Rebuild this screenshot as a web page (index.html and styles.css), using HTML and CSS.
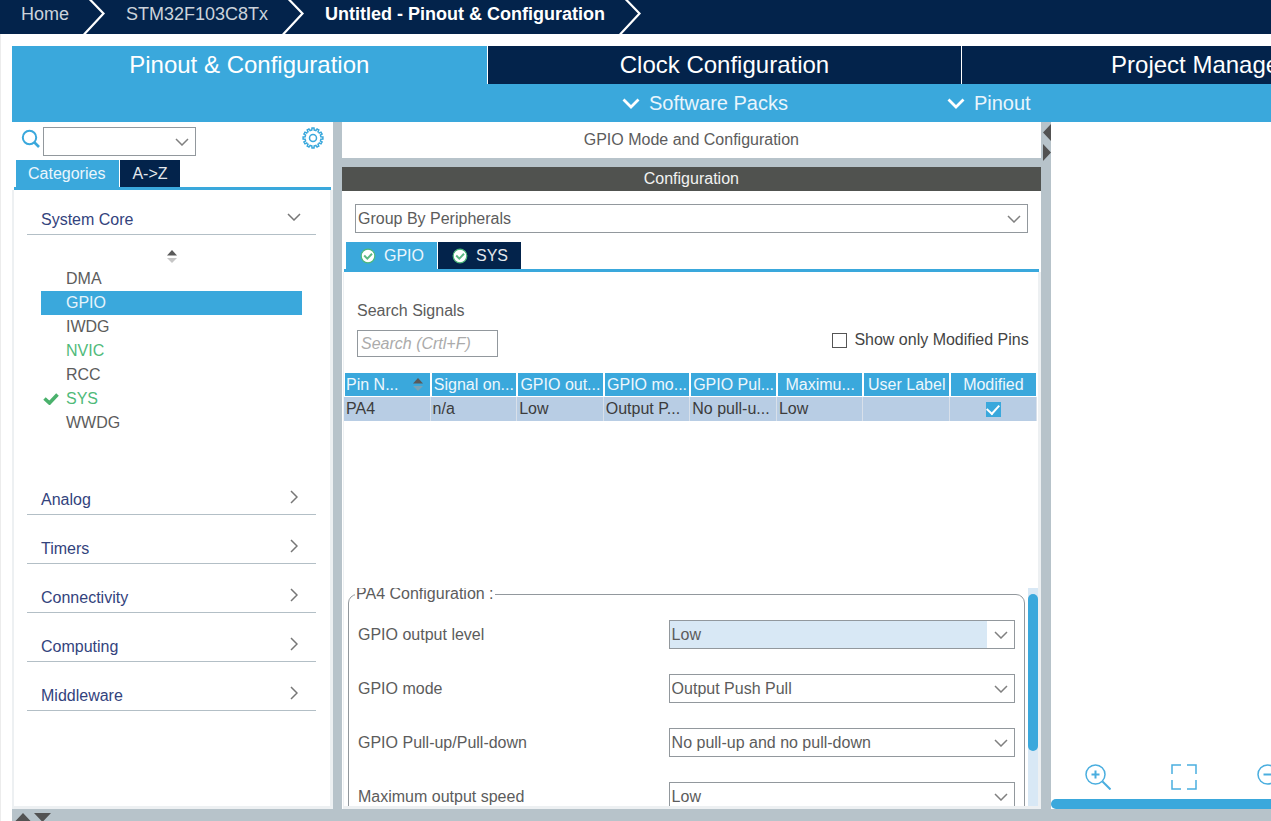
FILE: index.html
```html
<!DOCTYPE html>
<html lang="en">
<head>
<meta charset="utf-8">
<title>Untitled - Pinout &amp; Configuration</title>
<link rel="stylesheet" href="styles.css">
</head>
<body>
<svg class="defs" aria-hidden="true">
  <symbol id="chev-down" viewBox="0 0 14 8"><path d="M1 1l6 6 6-6" fill="none" stroke="currentColor" stroke-width="1.5"/></symbol>
  <symbol id="chev-right" viewBox="0 0 8 14"><path d="M1 1l6 6-6 6" fill="none" stroke="currentColor" stroke-width="1.5"/></symbol>
  <symbol id="crumb-sep" viewBox="0 0 24 34"><path d="M6 -1.500L20.500 13.500 1 34.500" fill="none" stroke="#fff" stroke-width="2.200"/></symbol>
  <symbol id="menu-chev" viewBox="0 0 18 11"><path d="M1.500 1.500L9 9l7.500-7.500" fill="none" stroke="#fff" stroke-width="2.800"/></symbol>
  <symbol id="sort" viewBox="0 0 10 13"><path d="M0 5.500L5 0l5 5.500z" class="sort-up"/><path d="M0 8h10L5 13z" class="sort-dn"/></symbol>
  <symbol id="ok" viewBox="0 0 16 16"><circle cx="8" cy="8" r="6.800" fill="#fff" stroke="#4db87a" stroke-width="1.200"/><path d="M4.200 7.500L7.300 10.600 12 5.800" fill="none" stroke="#5cb983" stroke-width="2"/></symbol>
  <symbol id="tooth" viewBox="0 0 22 22"><path d="M8.900 3.300L9.800 3.100 10 1.100h2l.2 2 .9.200" fill="none" stroke="#3aa8dc" stroke-width="1.500"/></symbol>
</svg>

<nav class="crumbs" aria-label="Breadcrumb">
  <a href="#" class="crumb">Home</a><svg class="sep"><use href="#crumb-sep"/></svg>
  <a href="#" class="crumb">STM32F103C8Tx</a><svg class="sep"><use href="#crumb-sep"/></svg>
  <a href="#" class="crumb current">Untitled - Pinout &amp; Configuration</a><svg class="sep"><use href="#crumb-sep"/></svg>
</nav>

<div class="app">
  <div class="main-tabs">
    <button class="main-tab active">Pinout &amp; Configuration</button>
    <button class="main-tab">Clock Configuration</button>
    <button class="main-tab">Project Manager</button>
  </div>
  <div class="subbar">
    <button class="menu"><svg class="menu-icon"><use href="#menu-chev"/></svg>Software Packs</button>
    <button class="menu"><svg class="menu-icon"><use href="#menu-chev"/></svg>Pinout</button>
  </div>

  <div class="workspace">
    <aside class="side">
      <div class="side-search">
        <svg class="lens" viewBox="0 0 20 20"><circle cx="8.500" cy="8.500" r="6.700" fill="none" stroke="#3aa8dc" stroke-width="2"/><path d="M13 13l5 5" stroke="#3aa8dc" stroke-width="2.600"/></svg>
        <span class="combo side-combo"><select aria-label="Search"><option></option></select><svg class="arrow"><use href="#chev-down"/></svg></span>
        <button class="gear" aria-label="Settings"><svg viewBox="0 0 22 22" fill="none" stroke="#3aa8dc"><use href="#tooth"/><use href="#tooth" transform="rotate(30 11 11)"/><use href="#tooth" transform="rotate(60 11 11)"/><use href="#tooth" transform="rotate(90 11 11)"/><use href="#tooth" transform="rotate(120 11 11)"/><use href="#tooth" transform="rotate(150 11 11)"/><use href="#tooth" transform="rotate(180 11 11)"/><use href="#tooth" transform="rotate(210 11 11)"/><use href="#tooth" transform="rotate(240 11 11)"/><use href="#tooth" transform="rotate(270 11 11)"/><use href="#tooth" transform="rotate(300 11 11)"/><use href="#tooth" transform="rotate(330 11 11)"/><circle cx="11" cy="11" r="3.500" stroke-width="1.500"/></svg></button>
      </div>
      <div class="tabs"><button class="tab active">Categories</button><button class="tab">A-&gt;Z</button></div>
      <div class="side-pane">
        <button class="cat">System Core<svg class="cat-down"><use href="#chev-down"/></svg></button>
        <div class="cat-body">
          <button class="sort-btn" aria-label="Sort"><svg class="sort"><use href="#sort"/></svg></button>
          <ul class="items">
            <li>DMA</li>
            <li class="selected">GPIO</li>
            <li>IWDG</li>
            <li class="green">NVIC</li>
            <li>RCC</li>
            <li class="green"><svg class="tick" viewBox="0 0 16 12"><path d="M1.500 5.500l5 4.500L14.500 1.500" fill="none" stroke="#4ab16c" stroke-width="3.600"/></svg>SYS</li>
            <li>WWDG</li>
          </ul>
        </div>
        <button class="cat">Analog<svg class="cat-right"><use href="#chev-right"/></svg></button>
        <button class="cat">Timers<svg class="cat-right"><use href="#chev-right"/></svg></button>
        <button class="cat">Connectivity<svg class="cat-right"><use href="#chev-right"/></svg></button>
        <button class="cat">Computing<svg class="cat-right"><use href="#chev-right"/></svg></button>
        <button class="cat">Middleware<svg class="cat-right"><use href="#chev-right"/></svg></button>
      </div>
    </aside>

    <div class="splitter"></div>

    <main class="center">
      <h1 class="mode-title">GPIO Mode and Configuration</h1>
      <h2 class="conf-title">Configuration</h2>
      <div class="group-row">
        <span class="combo"><select aria-label="Grouping"><option>Group By Peripherals</option></select><svg class="arrow"><use href="#chev-down"/></svg></span>
      </div>
      <div class="tabs"><button class="tab io active"><svg class="ok"><use href="#ok"/></svg>GPIO</button><button class="tab io"><svg class="ok"><use href="#ok"/></svg>SYS</button></div>
      <div class="center-pane">
        <div class="filters">
          <div class="search-group">
            <label for="signals">Search Signals</label>
            <input id="signals" class="search" type="text" placeholder="Search (Crtl+F)">
          </div>
          <label class="only"><input type="checkbox" class="box">Show only Modified Pins</label>
        </div>
        <table class="pins">
          <thead>
            <tr>
              <th><span class="pin-head">Pin N... <svg class="sort"><use href="#sort"/></svg></span></th>
              <th>Signal on...</th><th>GPIO out...</th><th>GPIO mo...</th><th>GPIO Pul...</th><th>Maximu...</th><th>User Label</th><th>Modified</th>
            </tr>
          </thead>
          <tbody>
            <tr>
              <td>PA4</td><td>n/a</td><td>Low</td><td>Output P...</td><td>No pull-u...</td><td>Low</td><td></td>
              <td class="mod"><input type="checkbox" class="box blue" aria-label="Modified" checked></td>
            </tr>
          </tbody>
        </table>
        <div class="spacer"></div>
        <div class="detail">
          <div class="detail-view">
            <fieldset class="pa4">
              <legend>PA4 Configuration :</legend>
              <div class="field"><label for="lvl">GPIO output level</label><span class="combo focus"><select id="lvl"><option>Low</option></select><svg class="arrow"><use href="#chev-down"/></svg></span></div>
              <div class="field"><label for="mode">GPIO mode</label><span class="combo"><select id="mode"><option>Output Push Pull</option></select><svg class="arrow"><use href="#chev-down"/></svg></span></div>
              <div class="field"><label for="pull">GPIO Pull-up/Pull-down</label><span class="combo"><select id="pull"><option>No pull-up and no pull-down</option></select><svg class="arrow"><use href="#chev-down"/></svg></span></div>
              <div class="field"><label for="speed">Maximum output speed</label><span class="combo"><select id="speed"><option>Low</option></select><svg class="arrow"><use href="#chev-down"/></svg></span></div>
            </fieldset>
          </div>
          <div class="track"><div class="thumb"></div></div>
        </div>
      </div>
    </main>

    <div class="splitter wide">
      <svg class="collapse" viewBox="0 0 8 38"><path d="M8 1v17L0 9.500zM0 21v17l8-8.500z" fill="#525252"/></svg>
    </div>

    <section class="canvas" aria-label="Pinout view">
      <div class="tools">
        <button class="tool" aria-label="Zoom in"><svg viewBox="0 0 26 26"><circle cx="10.500" cy="10.500" r="9.500"/><path d="M17.500 17.500l8 8" stroke-width="2"/><path d="M6.500 10.500h8M10.500 6.500v8" stroke-width="2"/></svg></button>
        <button class="tool" aria-label="Best fit"><svg viewBox="0 0 26 26"><path d="M1 10V1h9M16 1h9v9M25 16v9h-9M10 25H1v-9"/></svg></button>
        <button class="tool" aria-label="Zoom out"><svg viewBox="0 0 26 26"><circle cx="10.500" cy="10.500" r="9.500"/><path d="M17.500 17.500l8 8" stroke-width="2"/><path d="M6.500 10.500h8" stroke-width="2"/></svg></button>
      </div>
      <div class="hscroll"></div>
    </section>
  </div>
  <div class="bottom-bar"><svg class="expand" viewBox="0 0 36 8"><path d="M0 8.500L8 0l8 8.500zM19 0h17l-8.500 9z" fill="#525252"/></svg></div>
</div>
</body>
</html>
```
FILE: styles.css
```css
* { box-sizing: border-box; }

body {
  margin: 0;
  height: 100vh;
  display: flex;
  flex-direction: column;
  overflow: hidden;
  background: #fff;
  color: #5c5c5c;
  font-family: "Liberation Sans", Arial, sans-serif;
  font-size: 16px;
  line-height: 20px;
}

button, select, input {
  font: inherit;
  color: inherit;
  margin: 0;
}

button {
  border: 0;
  padding: 0;
  background: none;
}

.defs { position: absolute; width: 0; height: 0; }

/* Breadcrumb */
.crumbs {
  flex: none;
  display: flex;
  height: 34px;
  padding-left: 21px;
  background: #03234b;
}

.crumb {
  color: #ccd3db;
  font-size: 18px;
  line-height: 28px;
  text-decoration: none;
  white-space: nowrap;
}

.crumb.current { color: #fff; font-weight: bold; }

.sep { width: 24px; height: 34px; margin: 0 19px 0 14px; }

/* Frame */
.app {
  flex: 1;
  min-height: 0;
  display: flex;
  flex-direction: column;
  padding: 12px 0 0 11px;
  border-left: 1px solid #ececec;
}

.main-tabs {
  flex: none;
  display: grid;
  grid-template-columns: repeat(3, 37.7%);
  height: 38px;
  overflow: hidden;
}

.main-tab {
  background: #03234b;
  border-left: 1px solid #fff;
  color: #fff;
  font-size: 24px;
  line-height: 38px;
}

.main-tab.active { background: #3aa8dc; border-left: 0; }

.subbar {
  flex: none;
  display: flex;
  gap: 159px;
  height: 38px;
  padding-left: 610px;
  background: #3aa8dc;
}

.menu {
  display: flex;
  align-items: center;
  gap: 9px;
  color: #e9f5fc;
  font-size: 20px;
}

.menu-icon { width: 18px; height: 11px; }

.workspace { flex: 1; min-height: 0; display: flex; }

.splitter { flex: none; width: 9px; background: #b7c3ca; }
.splitter.wide { width: 10px; padding: 1px 0 0 2px; }
.collapse { display: block; width: 8px; height: 38px; }

/* Side panel */
.side {
  flex: none;
  width: 321px;
  display: flex;
  flex-direction: column;
}

.side-search {
  display: flex;
  align-items: flex-start;
  height: 38px;
  padding: 5px 9px 0;
}

.lens { width: 20px; height: 20px; margin: 2px 2px 0 0; }
.side-combo { width: 153px; }
.gear { width: 22px; height: 22px; margin-left: auto; }
.gear svg { display: block; width: 22px; height: 22px; }

.tabs {
  flex: none;
  display: flex;
  gap: 1px;
  margin: 0 2px;
  padding-left: 2px;
  border-bottom: 3px solid #3aa8dc;
}

.tab {
  height: 27px;
  padding: 0 12px;
  background: #03234b;
  color: #e4e8ed;
}

.side .tab.active { padding: 0 14px 0 12px; }
.tab.active { background: #3aa8dc; color: #eaf6fc; }

.tab.io {
  display: flex;
  align-items: center;
  gap: 8px;
  padding: 0 13px 0 14px;
}

.ok { width: 16px; height: 16px; }

.side-pane {
  flex: 1;
  min-height: 0;
  display: flex;
  flex-direction: column;
  padding: 0 14px 0 13px;
  border: solid #edf0f2;
  border-width: 0 3px 3px 2px;
}

.cat {
  flex: none;
  display: flex;
  align-items: center;
  justify-content: space-between;
  height: 49px;
  padding: 19px 15px 0 14px;
  border-bottom: 1px solid #b3bfc6;
  color: #33437d;
}

.cat:first-child { height: 45px; padding-top: 15px; }
.cat svg { color: #777; margin-bottom: 5px; }
.cat-down { width: 14px; height: 8px; }
.cat-right { width: 8px; height: 14px; margin-right: 3px; }

.cat-body { flex: none; height: 231px; padding: 15px 14px 0; }

.sort-btn { display: flex; justify-content: center; width: 100%; height: 17px; }
.sort { width: 10px; height: 13px; }
.sort-up { fill: #5a5a5a; }
.sort-dn { fill: #a0a0a0; opacity: 0.6; }

.items { margin: 0; padding: 0; list-style: none; }

.items li {
  display: flex;
  align-items: center;
  height: 24px;
  padding-left: 25px;
}

.items .selected { background: #3aa8dc; color: #e6f4fb; }
.items .green { color: #4fba7a; }
.tick { width: 16px; height: 12px; margin: 0 7px 0 -23px; }

/* Combo boxes */
.combo { display: grid; background: #fff; border: 1px solid #92989d; }
.combo select, .combo .arrow { grid-area: 1 / 1; }

.combo select {
  width: 100%;
  height: 27px;
  padding: 0 28px 0 2px;
  border: 0;
  appearance: none;
  background: none;
}

.combo .arrow {
  justify-self: end;
  align-self: center;
  width: 14px;
  height: 8px;
  margin-right: 6px;
  color: #808080;
  pointer-events: none;
}

.combo.focus { background: linear-gradient(to left, #fff 27px, #d8e8f5 27px); }

/* Center panel */
.center {
  flex: 1 1 699px;
  min-width: 0;
  display: flex;
  flex-direction: column;
}

.mode-title, .conf-title {
  flex: none;
  margin: 0;
  font-size: 16px;
  font-weight: normal;
  text-align: center;
}

.mode-title {
  padding: 8px 0;
  border-bottom: 9px solid #b7c3ca;
}

.conf-title { background: #50524f; color: #f2f2f2; line-height: 24px; }
.group-row { padding: 13px 13px 9px; }

.center-pane {
  flex: 1;
  min-height: 0;
  display: flex;
  flex-direction: column;
  margin-left: 1px;
  border: solid #edf0f2;
  border-width: 0 3px 3px 1px;
}

.filters {
  flex: none;
  display: flex;
  justify-content: space-between;
  align-items: flex-end;
  padding: 29px 9px 16px 13px;
}

.search-group { display: flex; flex-direction: column; gap: 9px; }

.search {
  width: 141px;
  height: 27px;
  padding: 0 3px;
  border: 1px solid #92989d;
}

.search::placeholder { color: #ababab; font-style: italic; }

.only {
  display: flex;
  align-items: center;
  gap: 7px;
  margin-bottom: 7px;
  color: #444;
}

.box {
  appearance: none;
  width: 15px;
  height: 15px;
  border: 1px solid #555;
  background: #fff;
}

.box.blue {
  display: grid;
  place-items: center;
  margin: 0 auto;
  border: 0;
  background: #3aa8dc;
}

.box.blue:checked::before {
  content: "";
  width: 6px;
  height: 10px;
  margin-bottom: 3px;
  border: solid #fff;
  border-width: 0 2px 2px 0;
  transform: rotate(42deg);
}

.pins {
  flex: none;
  width: 100%;
  table-layout: fixed;
  border-collapse: separate;
  border-spacing: 0;
  padding-right: 1px;
}

.pins th, .pins td {
  height: 24px;
  padding: 0 1px;
  overflow: hidden;
  white-space: nowrap;
  text-align: left;
  font-weight: normal;
}

.pins th {
  background: #3aa8dc;
  border: solid #fff;
  border-width: 0 1px 1px;
  color: #eef7fc;
  text-align: center;
}

.pins td { padding-left: 2px; background: #b8cde4; border-right: 1px solid #d8e0ea; color: #3c3c3c; }
.pin-head { display: flex; align-items: center; justify-content: space-between; padding-right: 6px; }

.spacer { flex: 1 1 auto; }

.detail {
  flex: none;
  display: flex;
  height: 218px;
  padding-left: 4px;
  overflow: hidden;
}

.detail-view { flex: 1; height: 218px; overflow: hidden; }

.pa4 {
  margin: -4px 3px 0 0;
  padding: 16px 9px 0;
  border: 1px solid #92989d;
  border-radius: 9px;
}

.pa4 legend { margin-left: -3px; padding: 0 1px; }

.field {
  display: grid;
  grid-template-columns: 47.3% 1fr;
  align-items: center;
  margin-bottom: 25px;
}

.track { flex: none; width: 10px; padding-top: 6px; background: #d8e8f5; }
.thumb { height: 157px; border-radius: 5px; background: #3aa8dc; }

/* Canvas */
.canvas {
  flex: 0 0 17.5%;
  display: flex;
  flex-direction: column;
  justify-content: flex-end;
  overflow: hidden;
}

.tools { display: flex; gap: 60px; padding: 0 0 9px 34px; }
.tool { flex: none; width: 26px; height: 26px; }
.tool svg { display: block; width: 26px; height: 26px; fill: none; stroke: #4aaedf; stroke-width: 1.5; }
.hscroll { height: 10px; border-radius: 5px 0 0 5px; background: #3aa8dc; }

.bottom-bar { flex: none; height: 12px; padding: 4px 0 0 3px; background: #b7c3ca; }
.expand { display: block; width: 36px; height: 8px; }
```
